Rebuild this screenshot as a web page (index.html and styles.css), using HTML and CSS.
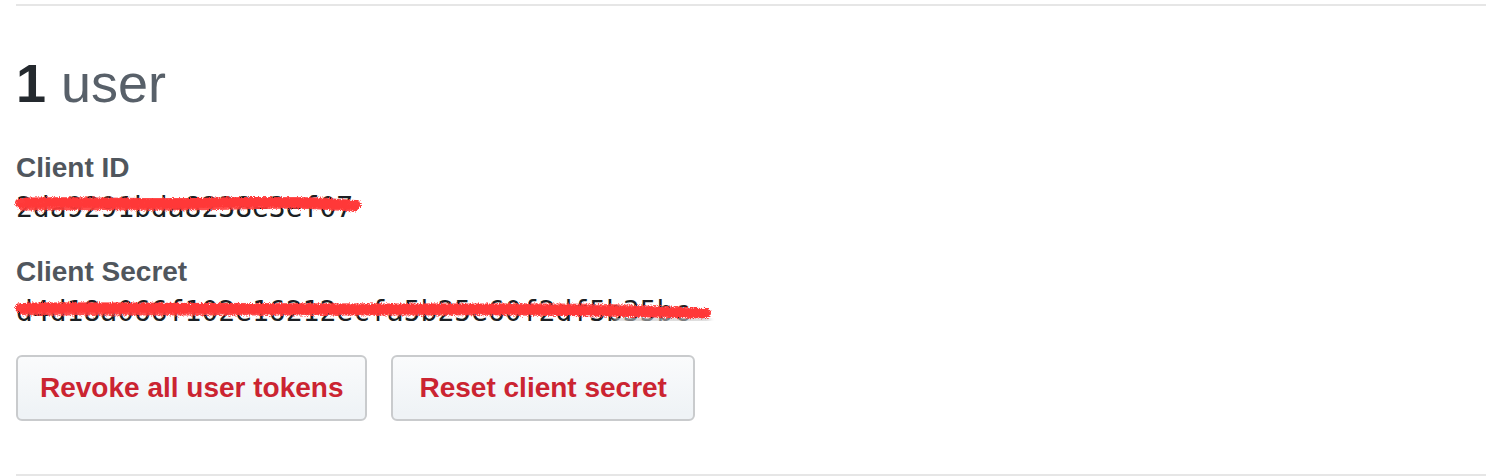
FILE: index.html
```html
<!DOCTYPE html>
<html lang="en">
<head>
<meta charset="utf-8">
<title>OAuth App</title>
<link rel="stylesheet" href="styles.css">
</head>
<body>
<svg class="defs" width="0" height="0" aria-hidden="true">
  <defs>
    <filter id="rough" x="-5%" y="-50%" width="110%" height="200%">
      <feTurbulence type="fractalNoise" baseFrequency="0.9" numOctaves="2" seed="3" result="noise"/>
      <feDisplacementMap in="SourceGraphic" in2="noise" scale="5" xChannelSelector="R" yChannelSelector="G"/>
    </filter>
    <filter id="blur" x="-10%" y="-100%" width="120%" height="300%">
      <feGaussianBlur stdDeviation="2"/>
    </filter>
  </defs>
</svg>
<div class="section">
  <h2 class="count"><strong>1</strong> user</h2>
  <dl class="creds">
    <dt class="label">Client ID</dt>
    <dd class="value">
      <code class="code">2da9291bda8238e3ef07</code>
      <svg class="redact redact-id" width="350" height="40" viewBox="0 0 350 40" aria-hidden="true">
        <g filter="url(#rough)" fill="none" stroke="#ff3a3a" stroke-linecap="round">
          <path d="M4 14 C 60 12, 120 16, 180 14 S 290 13, 340 16" stroke-width="10"/>
          <path d="M6 18 C 80 17, 150 19, 220 17 S 300 17, 338 19" stroke-width="7" stroke-opacity="0.9"/>
          <path d="M10 11 C 90 10, 160 13, 240 11 S 310 12, 330 13" stroke-width="5" stroke-opacity="0.8"/>
        </g>
      </svg>
    </dd>
    <dt class="label">Client Secret</dt>
    <dd class="value">
      <code class="code">d4d18a066f102e16212ecfa5b25e60f2df5b35bc</code>
      <svg class="redact redact-secret" width="700" height="44" viewBox="0 0 700 44" aria-hidden="true">
        <path d="M600 27 C 640 28, 670 28, 692 27" stroke="#c4c4c4" stroke-width="5" fill="none" stroke-linecap="round" filter="url(#blur)" opacity="0.8"/>
        <g filter="url(#rough)" fill="none" stroke="#ff3a3a" stroke-linecap="round">
          <path d="M4 16 C 120 14, 250 18, 380 17 S 580 19, 690 21" stroke-width="10"/>
          <path d="M8 20 C 140 19, 280 21, 420 20 S 600 22, 686 23" stroke-width="7" stroke-opacity="0.9"/>
          <path d="M12 13 C 150 12, 300 15, 450 14 S 620 16, 680 18" stroke-width="5" stroke-opacity="0.8"/>
        </g>
      </svg>
    </dd>
  </dl>
  <div class="actions">
    <button class="btn btn-danger" type="button">Revoke all user tokens</button>
    <button class="btn btn-danger btn-wide" type="button">Reset client secret</button>
  </div>
</div>
</body>
</html>
```
FILE: styles.css
```css
html, body {
  margin: 0;
  padding: 0;
  background: #ffffff;
}

body {
  font-family: "Liberation Sans", Arial, sans-serif;
  color: #24292e;
}

.defs {
  position: absolute;
  width: 0;
  height: 0;
}

.section {
  margin: 4px 22px 0 16px;
  padding: 45px 0 53px;
  border-top: 2px solid #e6e6e6;
  border-bottom: 2px solid #e6e6e6;
}

.count {
  margin: 0 0 33px;
  font-size: 54px;
  line-height: 64px;
  font-weight: 400;
  color: #586069;
}

.count strong {
  font-weight: 700;
  color: #24292e;
}

.creds {
  margin: 0;
  display: flex;
  flex-direction: column;
}

.label {
  font-size: 28px;
  line-height: 40px;
  font-weight: 700;
  color: #50565d;
}

.value {
  margin: 0 0 24px;
  position: relative;
  line-height: 40px;
  height: 40px;
}

.value:last-child {
  margin-bottom: 0;
}

.code {
  font-family: "DejaVu Sans Mono", "Liberation Mono", monospace;
  font-size: 28px;
  line-height: 40px;
  color: #1b1f23;
}

.redact {
  position: absolute;
  left: 0;
  overflow: visible;
}

.redact-id {
  top: 1px;
}

.redact-secret {
  top: 0;
}

.actions {
  display: flex;
  gap: 24px;
  margin-top: 23px;
}

.btn {
  height: 66px;
  padding: 0 22px;
  font-family: "Liberation Sans", Arial, sans-serif;
  font-size: 28px;
  font-weight: 700;
  line-height: 62px;
  border: 2px solid #c9cbcd;
  border-radius: 6px;
  background: linear-gradient(180deg, #fafbfc 0%, #eff3f6 90%);
  cursor: pointer;
  white-space: nowrap;
}

.btn-wide {
  padding: 0 26px;
}

.btn-danger {
  color: #cb2431;
}
```
